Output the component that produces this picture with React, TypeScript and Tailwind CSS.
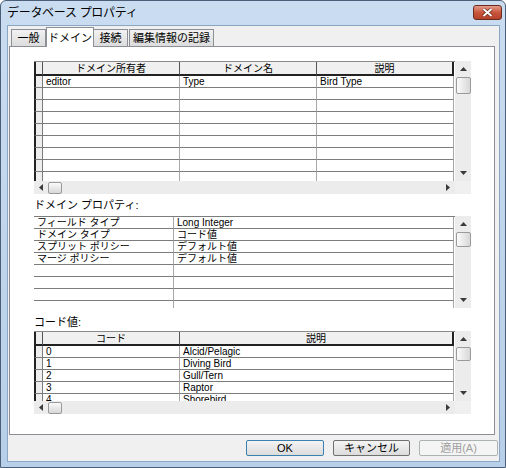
import React from 'react';

const FONT = { fontFamily: '"Liberation Sans", "Noto Sans CJK JP", sans-serif' };

const UpArrow = () => (
  <svg width="7" height="4" viewBox="0 0 7 4"><path d="M0 4 L3.5 0 L7 4 Z" fill="#3a3a3a" /></svg>
);
const DownArrow = () => (
  <svg width="7" height="4" viewBox="0 0 7 4"><path d="M0 0 L3.5 4 L7 0 Z" fill="#3a3a3a" /></svg>
);
const LeftArrow = () => (
  <svg width="4" height="7" viewBox="0 0 4 7"><path d="M4 0 L0 3.5 L4 7 Z" fill="#3a3a3a" /></svg>
);
const RightArrow = () => (
  <svg width="4" height="7" viewBox="0 0 4 7"><path d="M0 0 L4 3.5 L0 7 Z" fill="#3a3a3a" /></svg>
);

function VScroll({ thumb }: { thumb: number }) {
  return (
    <div className="w-[16px] h-full bg-[#ececec] flex flex-col items-center shrink-0">
      <div className="h-[16px] w-full flex items-center justify-center"><UpArrow /></div>
      <div
        className="w-[15px] rounded-[2px] border border-[#9a9a9a] bg-gradient-to-r from-[#fafafa] to-[#d8d8d8]"
        style={{ height: thumb }}
      />
      <div className="flex-1" />
      <div className="h-[16px] w-full flex items-center justify-center"><DownArrow /></div>
    </div>
  );
}

function HScroll() {
  return (
    <div className="flex h-[13px]">
      <div className="w-[421px] bg-[#ececec] flex items-center">
        <div className="w-[14px] flex justify-center"><LeftArrow /></div>
        <div className="w-[14px] h-[12px] rounded-[2px] border border-[#9a9a9a] bg-gradient-to-b from-[#fafafa] to-[#d8d8d8]" />
        <div className="flex-1" />
        <div className="w-[14px] flex justify-center"><RightArrow /></div>
      </div>
      <div className="w-[16px] bg-[#f0f0f0]" />
    </div>
  );
}

function Cell({ w, children }: { w: number; children?: React.ReactNode }) {
  return (
    <div
      className="h-[12px] shrink-0 border-r border-b border-r-[#a8a8a8] border-b-[#7c7c7c] pl-[3px] text-[10px] leading-[11px] whitespace-nowrap overflow-hidden"
      style={{ width: w }}
    >
      {children}
    </div>
  );
}

function Sel() {
  return <div className="h-[12px] w-[9px] shrink-0 border-l-2 border-l-[#222] border-b border-b-[#7c7c7c] border-r border-r-[#7c7c7c] bg-[#eeeeee]" />;
}

function Header({ cols, sel }: { cols: { w: number; t: string }[]; sel: boolean }) {
  return (
    <div className="flex h-[15px] shrink-0 border-t border-[#8a8a8a]">
      {sel && <div className="w-[9px] shrink-0 border-l-2 border-l-[#222] border-r border-r-[#555] border-b-2 border-b-[#222] bg-[#eeeeee]" />}
      {cols.map((c, i) => (
        <div
          key={i}
          className={
            'shrink-0 bg-[#f0f0f0] border-b-2 border-b-[#222] text-center text-[10px] leading-[13px] ' +
            (i === cols.length - 1 ? 'border-r-2 border-r-[#222]' : 'border-r border-r-[#555]')
          }
          style={{ width: c.w }}
        >
          {c.t}
        </div>
      ))}
    </div>
  );
}

function Grid({
  cols,
  rows,
  sel,
  height,
  thumb,
  hscroll,
}: {
  cols: { w: number; t: string }[];
  rows: string[][];
  sel: boolean;
  height: number;
  thumb: number;
  hscroll: boolean;
}) {
  return (
    <div className="flex flex-col w-[437px]">
      <div className="flex" style={{ height }}>
        <div className="w-[421px] h-full overflow-hidden bg-white flex flex-col">
          {cols[0].t !== '' && <Header cols={cols} sel={sel} />}
          {cols[0].t === '' && <div className="h-[1px] shrink-0 bg-[#7c7c7c]" />}
          {rows.map((r, ri) => (
            <div key={ri} className="flex shrink-0">
              {sel && <Sel />}
              {cols.map((c, ci) => (
                <Cell key={ci} w={c.w}>{r[ci]}</Cell>
              ))}
            </div>
          ))}
        </div>
        <VScroll thumb={thumb} />
      </div>
      {hscroll && <HScroll />}
    </div>
  );
}

const domainRows = [['editor', 'Type', 'Bird Type'], ...Array.from({ length: 8 }, () => ['', '', ''])];
const propRows = [
  ['フィールド タイプ', 'Long Integer'],
  ['ドメイン タイプ', 'コード値'],
  ['スプリット ポリシー', 'デフォルト値'],
  ['マージ ポリシー', 'デフォルト値'],
  ['', ''],
  ['', ''],
  ['', ''],
  ['', ''],
];
const codeRows = [
  ['0', 'Alcid/Pelagic'],
  ['1', 'Diving Bird'],
  ['2', 'Gull/Tern'],
  ['3', 'Raptor'],
  ['4', 'Shorebird'],
];

export default function App() {
  return (
    <div className="w-[506px] h-[468px] bg-white" style={FONT}>
      <div className="w-[506px] h-[468px] flex flex-col rounded-t-[6px] border border-[#4b5f78] bg-gradient-to-b from-[#cadcf0] to-[#b7cfe8]">
        {/* title bar */}
        <div className="h-[24px] shrink-0 flex items-center justify-between pl-[6px] pr-[3px]">
          <span className="text-[12px] text-black tracking-[-0.3px]">データベース プロパティ</span>
          <div className="w-[29px] h-[15px] rounded-[3px] border border-[#6d2b20] bg-gradient-to-b from-[#e39a88] via-[#c8553c] to-[#b5412a] flex items-center justify-center mb-[2px]">
            <svg width="11" height="9" viewBox="0 0 11 9">
              <path d="M1.5 1 L9.5 8 M9.5 1 L1.5 8" stroke="#5a1e14" strokeWidth="3.2" />
              <path d="M1.5 1 L9.5 8 M9.5 1 L1.5 8" stroke="#ffffff" strokeWidth="2" />
            </svg>
          </div>
        </div>
        {/* client */}
        <div className="flex-1 ml-[6px] mr-[5px] mb-[5px] bg-[#f0f0f0] border border-[#8ba6c4] flex flex-col">
          {/* tabs */}
          <div className="flex items-end h-[20px] pl-[3px] text-[11px]">
            <div className="w-[35px] h-[17px] border border-b-0 border-[#8c8f96] bg-gradient-to-b from-[#f2f2f2] to-[#dcdcdc] flex items-center justify-center">一般</div>
            <div className="w-[48px] h-[20px] -mb-[1px] relative z-10 border border-b-0 border-[#8c8f96] bg-white flex items-start justify-center pt-[2px]">ドメイン</div>
            <div className="w-[34px] h-[17px] border border-b-0 border-l-0 border-[#8c8f96] bg-gradient-to-b from-[#f2f2f2] to-[#dcdcdc] flex items-center justify-center">接続</div>
            <div className="w-[85px] h-[17px] ml-[1px] border border-b-0 border-[#8c8f96] bg-gradient-to-b from-[#f2f2f2] to-[#dcdcdc] flex items-center justify-center">編集情報の記録</div>
          </div>
          {/* panel */}
          <div className="h-[389px] ml-[1px] mr-[4px] bg-white border border-[#8c8f96] pl-[24px] pt-[14px] flex flex-col">
            <Grid
              cols={[
                { w: 137, t: 'ドメイン所有者' },
                { w: 137, t: 'ドメイン名' },
                { w: 137, t: '説明' },
              ]}
              rows={domainRows}
              sel
              height={120}
              thumb={17}
              hscroll
            />
            <div className="text-[11px] h-[22px] flex items-center pt-[1px]">ドメイン プロパティ:</div>
            <Grid
              cols={[
                { w: 140, t: '' },
                { w: 280, t: '' },
              ]}
              rows={propRows}
              sel={false}
              height={92}
              thumb={15}
              hscroll={false}
            />
            <div className="text-[11px] h-[23px] flex items-end pb-[1px]">コード値:</div>
            <Grid
              cols={[
                { w: 137, t: 'コード' },
                { w: 274, t: '説明' },
              ]}
              rows={codeRows}
              sel
              height={70}
              thumb={14}
              hscroll
            />
          </div>
          {/* buttons */}
          <div className="flex-1 flex items-center justify-end gap-[9px] pr-[1px] text-[11px]">
            <button className="w-[78px] h-[16px] rounded-[2px] border border-[#3c7fb1] bg-gradient-to-b from-[#f4f4f4] to-[#dcdcdc] leading-[14px]">OK</button>
            <button className="w-[77px] h-[16px] rounded-[2px] border border-[#707070] bg-gradient-to-b from-[#f4f4f4] to-[#dcdcdc] leading-[14px]">キャンセル</button>
            <button className="w-[79px] h-[16px] rounded-[2px] border border-[#adb2b5] bg-[#f4f4f4] text-[#a0a0a0] leading-[14px]">適用(A)</button>
          </div>
        </div>
      </div>
    </div>
  );
}
